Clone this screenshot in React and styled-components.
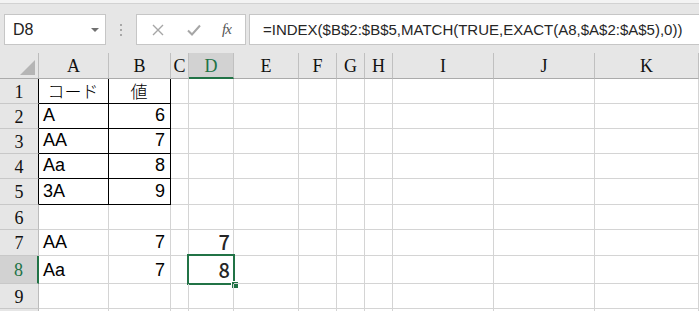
import React from "react";
import styled, { createGlobalStyle } from "styled-components";

const GlobalStyle = createGlobalStyle`
  body {
    margin: 0;
    background: #ffffff;
    overflow: hidden;
  }
`;

const green = "#217346";
const gridLine = "#d4d4d4";

const Page = styled.div`
  width: 699px;
  height: 311px;
  overflow: hidden;
  background: #ffffff;
`;

const TopStrip = styled.div`
  height: 3px;
  background: #f3f3f3;
  border-bottom: 1px solid #d2d2d2;
`;

const Bar = styled.div`
  height: 49px;
  background: #e6e6e6;
  display: flex;
  align-items: flex-start;
  padding-top: 10px;
  box-sizing: border-box;
`;

const NameBox = styled.div`
  margin-left: 4px;
  width: 102px;
  height: 31px;
  box-sizing: border-box;
  background: #fff;
  border: 1px solid #c6c6c6;
  display: flex;
  align-items: center;
  justify-content: space-between;
  padding: 0 6px 0 8px;
  font-family: "Liberation Sans", "Noto Sans CJK JP", sans-serif;
  font-size: 16px;
  color: #222;
`;

const Caret = styled.span`
  width: 0;
  height: 0;
  border-left: 4px solid transparent;
  border-right: 4px solid transparent;
  border-top: 4px solid #707070;
`;

const Grip = styled.div`
  width: 30px;
  height: 31px;
  display: flex;
  flex-direction: column;
  align-items: center;
  justify-content: center;
  gap: 3px;
  span {
    width: 2px;
    height: 2px;
    background: #a8a8a8;
  }
`;

const FxBox = styled.div`
  width: 110px;
  height: 31px;
  box-sizing: border-box;
  background: #fff;
  border: 1px solid #c6c6c6;
  display: flex;
  align-items: center;
  justify-content: space-around;
  padding: 0 4px;
`;

const FxLabel = styled.span`
  font-family: "Liberation Serif", serif;
  font-style: italic;
  font-size: 15px;
  color: #555;
  letter-spacing: -1px;
`;

const Formula = styled.div`
  margin-left: 3px;
  flex: 1;
  height: 31px;
  box-sizing: border-box;
  background: #fff;
  border: 1px solid #c6c6c6;
  border-right: none;
  display: flex;
  align-items: center;
  padding-left: 13px;
  font-family: "Liberation Sans", sans-serif;
  font-size: 15px;
  color: #262626;
  white-space: nowrap;
`;

const cols = [
  { k: "A", w: 70 },
  { k: "B", w: 62 },
  { k: "C", w: 18 },
  { k: "D", w: 45 },
  { k: "E", w: 65 },
  { k: "F", w: 38 },
  { k: "G", w: 28 },
  { k: "H", w: 28 },
  { k: "I", w: 101 },
  { k: "J", w: 101 },
  { k: "K", w: 104 },
];

const rowHeights = [25, 25, 25, 25, 26, 25, 26, 28, 25, 25];

const Sheet = styled.div`
  display: grid;
  grid-template-columns: 39px ${cols.map((c) => c.w + "px").join(" ")} 1fr;
  grid-template-rows: 26px ${rowHeights.map((h) => h + "px").join(" ")};
`;

const Corner = styled.div`
  background: #e6e6e6;
  border-right: 1px solid #bcbcbc;
  border-bottom: 1px solid #ababab;
  display: flex;
  align-items: flex-end;
  justify-content: flex-end;
  padding: 0 3px 3px 0;
  svg {
    display: block;
  }
`;

const ColHead = styled.div`
  background: ${(p) => (p.$active ? "#d2d2d2" : "#e6e6e6")};
  border-right: 1px solid #c0c0c0;
  border-bottom: ${(p) => (p.$active ? `2px solid ${green}` : "1px solid #ababab")};
  display: flex;
  align-items: center;
  justify-content: center;
  font-family: "Liberation Serif", serif;
  font-size: 18px;
  color: ${(p) => (p.$active ? green : "#111")};
  padding-top: 2px;
  box-sizing: border-box;
  overflow: hidden;
`;

const RowHead = styled.div`
  background: ${(p) => (p.$active ? "#d2d2d2" : "#e6e6e6")};
  border-right: ${(p) =>
    p.$active ? `2px solid ${green}` : p.$edge ? "1px solid #000" : "1px solid #bcbcbc"};
  border-bottom: 1px solid #c8c8c8;
  display: flex;
  align-items: center;
  justify-content: center;
  font-family: "Liberation Serif", serif;
  font-size: 18px;
  color: ${(p) => (p.$active ? green : "#111")};
  padding-top: 2px;
  box-sizing: border-box;
`;

const Cell = styled.div`
  position: relative;
  border-right: 1px solid ${(p) => (p.$edge ? "#000" : gridLine)};
  border-bottom: 1px solid ${(p) => (p.$edge ? "#000" : gridLine)};
  display: flex;
  align-items: flex-end;
  justify-content: ${(p) =>
    p.$align === "right" ? "flex-end" : p.$align === "center" ? "center" : "flex-start"};
  padding: 0 5px 1px 4px;
  box-sizing: border-box;
  font-family: "Liberation Sans", "Noto Sans CJK JP", sans-serif;
  font-size: 18px;
  line-height: 1.2;
  color: #000;
  white-space: nowrap;
`;

const Kana = styled.span`
  font-family: "Noto Sans CJK JP", sans-serif;
  font-size: 17px;
  font-weight: 300;
  line-height: 1.3;
`;

const Result = styled.span`
  font-family: "Noto Sans CJK JP", sans-serif;
  font-size: 20px;
  font-weight: 500;
  line-height: 1;
  color: #262626;
  margin-right: -2px;
  padding-bottom: 2px;
`;

const Selection = styled.div`
  position: absolute;
  left: -2px;
  top: -2px;
  right: -2px;
  bottom: -2px;
  border: 2px solid ${green};
  pointer-events: none;
`;

const Handle = styled.span`
  position: absolute;
  right: -5px;
  bottom: -5px;
  width: 6px;
  height: 6px;
  background: ${green};
  border-left: 1px solid #fff;
  border-top: 1px solid #fff;
`;

const data = {
  1: { A: { t: "コード", a: "center", k: true }, B: { t: "値", a: "center", k: true } },
  2: { A: { t: "A" }, B: { t: "6", a: "right" } },
  3: { A: { t: "AA" }, B: { t: "7", a: "right" } },
  4: { A: { t: "Aa" }, B: { t: "8", a: "right" } },
  5: { A: { t: "3A" }, B: { t: "9", a: "right" } },
  7: { A: { t: "AA" }, B: { t: "7", a: "right" }, D: { t: "7", a: "right", r: true } },
  8: { A: { t: "Aa" }, B: { t: "7", a: "right" }, D: { t: "8", a: "right", r: true } },
};

function Icons() {
  return (
    <>
      <svg width="14" height="14" viewBox="0 0 14 14">
        <path d="M2 2 L12 12 M12 2 L2 12" stroke="#a6a6a6" strokeWidth="1.4" />
      </svg>
      <svg width="16" height="14" viewBox="0 0 16 14">
        <path d="M2 7.5 L6 11.5 L14 2.5" stroke="#a6a6a6" strokeWidth="2" fill="none" />
      </svg>
      <FxLabel>fx</FxLabel>
    </>
  );
}

function CellText({ v }) {
  if (!v) return null;
  if (v.r) return <Result>{v.t}</Result>;
  if (v.k) return <Kana>{v.t}</Kana>;
  return v.t;
}

export default function App() {
  return (
    <Page>
      <GlobalStyle />
      <TopStrip />
      <Bar>
        <NameBox>
          D8
          <Caret />
        </NameBox>
        <Grip>
          <span />
          <span />
          <span />
        </Grip>
        <FxBox>
          <Icons />
        </FxBox>
        <Formula>=INDEX($B$2:$B$5,MATCH(TRUE,EXACT(A8,$A$2:$A$5),0))</Formula>
      </Bar>
      <Sheet>
        <Corner>
          <svg width="15" height="15" viewBox="0 0 15 15">
            <path d="M15 0 L15 15 L0 15 Z" fill="#b5b5b5" />
          </svg>
        </Corner>
        {cols.map((c) => (
          <ColHead key={c.k} $active={c.k === "D"}>
            {c.k}
          </ColHead>
        ))}
        <ColHead />
        {rowHeights.map((_, i) => {
          const r = i + 1;
          const row = data[r] || {};
          return (
            <React.Fragment key={r}>
              <RowHead $active={r === 8} $edge={r <= 5}>
                {r <= 9 ? r : null}
              </RowHead>
              {cols.map((c) => {
                const v = row[c.k];
                const edge = r <= 5 && (c.k === "A" || c.k === "B");
                return (
                  <Cell key={c.k} $edge={edge} $align={v && v.a}>
                    <CellText v={v} />
                    {r === 8 && c.k === "D" && (
                      <Selection>
                        <Handle />
                      </Selection>
                    )}
                  </Cell>
                );
              })}
              <Cell />
            </React.Fragment>
          );
        })}
      </Sheet>
    </Page>
  );
}
